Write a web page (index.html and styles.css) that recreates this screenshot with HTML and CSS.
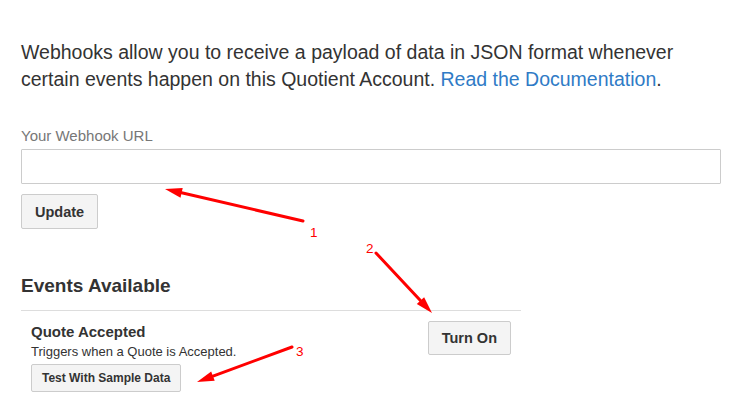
FILE: index.html
```html
<!DOCTYPE html>
<html lang="en">
<head>
<meta charset="utf-8">
<title>Webhooks</title>
<link rel="stylesheet" href="styles.css">
</head>
<body>
<main class="page">
  <p class="intro">Webhooks allow you to receive a payload of data in JSON format whenever certain events happen on this Quotient Account. <a class="doc-link" href="#">Read the Documentation</a>.</p>
  <label class="field-label" for="url">Your Webhook URL</label>
  <input class="url-input" id="url" type="text">
  <button class="btn btn-lg update-btn">Update</button>
  <section class="events">
    <h3 class="events-title">Events Available</h3>
    <div class="event">
      <div class="event-info">
        <h4 class="event-name">Quote Accepted</h4>
        <p class="event-desc">Triggers when a Quote is Accepted.</p>
        <button class="btn btn-sm">Test With Sample Data</button>
      </div>
      <button class="btn btn-lg">Turn On</button>
    </div>
  </section>
</main>
<svg class="annotations" width="743" height="412" viewBox="0 0 743 412">
  <g stroke="#f00" stroke-width="3" stroke-linecap="round" fill="none">
    <line x1="303" y1="221" x2="181.6" y2="192.8"/>
    <line x1="376" y1="253" x2="420.4" y2="300.6"/>
    <line x1="292" y1="347" x2="213" y2="376.1"/>
  </g>
  <g fill="#f00">
    <polygon points="165,189 182.7,187.9 180.5,197.7"/>
    <polygon points="432,313 416.8,304 424.1,297.2"/>
    <polygon points="197,382 211.2,371.4 214.7,380.8"/>
  </g>
  <g class="num" fill="#f00">
    <text x="310" y="237">1</text>
    <text x="366" y="253">2</text>
    <text x="296" y="356">3</text>
  </g>
</svg>
</body>
</html>
```
FILE: styles.css
```css
html, body {
  margin: 0;
  padding: 0;
  background: #fff;
}

body {
  font-family: "Liberation Sans", Arial, sans-serif;
  color: #333;
  width: 743px;
  height: 412px;
  overflow: hidden;
  position: relative;
}

.page {
  padding: 39px 22px 0 21px;
}

.intro {
  margin: 0;
  font-size: 19.5px;
  line-height: 27px;
}

.doc-link {
  color: #2f7bc6;
  text-decoration: none;
}

.field-label {
  display: block;
  margin-top: 33px;
  margin-bottom: 3px;
  font-size: 15px;
  line-height: 20px;
  color: #777;
}

.url-input {
  display: block;
  box-sizing: border-box;
  width: 100%;
  height: 35px;
  margin: 0;
  border: 1px solid #ccc;
  border-radius: 1px;
  background: #fff;
  outline: none;
}

.btn {
  box-sizing: border-box;
  margin: 0;
  border: 1px solid #ccc;
  border-radius: 2px;
  background: #f4f4f4;
  color: #333;
  font-family: "Liberation Sans", Arial, sans-serif;
  font-weight: bold;
  cursor: pointer;
}

.btn-lg {
  height: 35px;
  padding: 0 13px;
  font-size: 14.5px;
}

.btn-sm {
  height: 28px;
  padding: 0 10px;
  font-size: 12px;
}

.update-btn {
  display: block;
  margin-top: 10px;
}

.events {
  margin-top: 45px;
  width: 500px;
}

.events-title {
  margin: 0;
  padding-bottom: 12px;
  border-bottom: 1px solid #ddd;
  font-size: 19px;
  line-height: 24px;
  font-weight: bold;
}

.event {
  display: flex;
  justify-content: space-between;
  align-items: flex-start;
  padding: 10px 10px 0;
}

.event-info {
  display: flex;
  flex-direction: column;
  align-items: flex-start;
}

.event-name {
  margin: 0;
  font-size: 15px;
  line-height: 22px;
  font-weight: bold;
}

.event-desc {
  margin: 0 0 3px;
  font-size: 13px;
  line-height: 18px;
}

.event .btn-lg {
  height: 34px;
}

.annotations {
  position: absolute;
  top: 0;
  left: 0;
  pointer-events: none;
}

.num {
  font-family: "Liberation Sans", Arial, sans-serif;
  font-size: 13.5px;
}
```
